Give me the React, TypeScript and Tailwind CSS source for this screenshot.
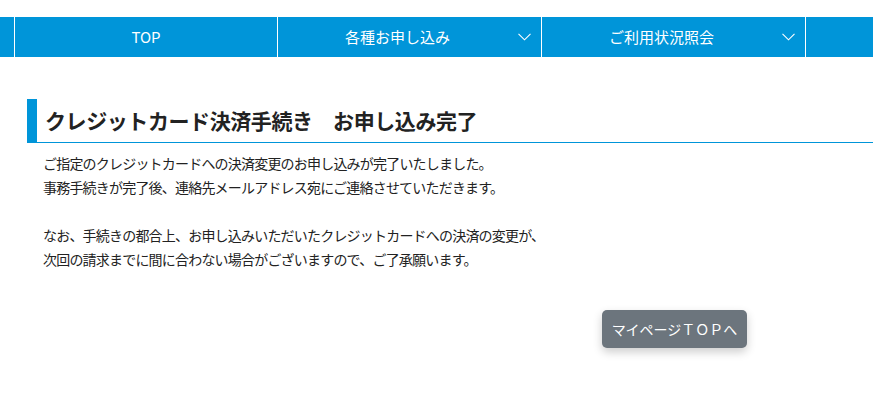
import React from "react";

const Chevron = () => (
  <svg width="13" height="8" viewBox="0 0 13 8" fill="none" className="absolute right-[10px] top-1/2 -translate-y-1/2">
    <path d="M0.5 0.8 L6.5 6.8 L12.5 0.8" stroke="white" strokeWidth="1.1" />
  </svg>
);

export default function App() {
  const jp = { fontFamily: '"Noto Sans CJK JP", "Noto Sans", sans-serif' };
  return (
    <div className="w-[873px] h-[398px] bg-white overflow-hidden" style={jp}>
      <div className="h-[17px]" />
      <nav className="flex h-[40px] bg-[#0095d9] text-white text-[15px]">
        <div className="w-[15px] border-r border-white" />
        <div className="w-[263px] border-r border-white flex items-center justify-center">TOP</div>
        <div className="relative w-[264px] border-r border-white flex items-center justify-center pr-[24px]">
          各種お申し込み
          <Chevron />
        </div>
        <div className="relative w-[264px] border-r border-white flex items-center justify-center pr-[24px]">
          ご利用状況照会
          <Chevron />
        </div>
        <div className="flex-1" />
      </nav>
      <div className="ml-[27px] mt-[42px]">
        <h1 className="h-[44px] border-l-[10px] border-b border-[#0095d9] pl-[8px] flex items-center text-[21px] font-bold text-[#222] tracking-[-0.02em]">
          クレジットカード決済手続き　お申し込み完了
        </h1>
        <div className="pl-[16px] pt-[8px] text-[14px] tracking-[-0.8px] leading-[24px] text-[#222]">
          <p>ご指定のクレジットカードへの決済変更のお申し込みが完了いたしました。</p>
          <p>事務手続きが完了後、連絡先メールアドレス宛にご連絡させていただきます。</p>
          <p>&nbsp;</p>
          <p>なお、手続きの都合上、お申し込みいただいたクレジットカードへの決済の変更が、</p>
          <p>次回の請求までに間に合わない場合がございますので、ご了承願います。</p>
        </div>
      </div>
      <div className="mt-[39px] ml-[602px]">
        <button className="w-[145px] h-[38px] rounded-[5px] bg-[#6c757d] text-white text-[14px] shadow-[0_4px_10px_rgba(0,0,0,0.2)] flex items-center justify-center">
          マイページＴＯＰへ
        </button>
      </div>
    </div>
  );
}
